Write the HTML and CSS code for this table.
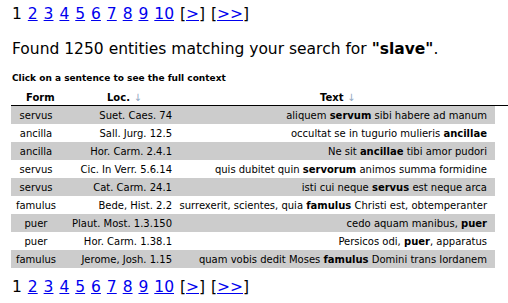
FILE: index.html
```html
<!DOCTYPE html>
<html>
<head>
<meta charset="utf-8">
<link rel="stylesheet" href="styles.css">
</head>
<body>
<div class="pager">1 <a href="#">2</a> <a href="#">3</a> <a href="#">4</a> <a href="#">5</a> <a href="#">6</a> <a href="#">7</a> <a href="#">8</a> <a href="#">9</a> <a href="#">10</a> [<a href="#">&gt;</a>] [<a href="#">&gt;&gt;</a>]</div>
<h1 class="found">Found 1250 entities matching your search for <b>"slave"</b>.</h1>
<p class="hint">Click on a sentence to see the full context</p>
<table class="results">
<colgroup><col class="w-form"><col class="w-loc"><col class="w-text"><col class="w-pad"></colgroup>
<thead>
<tr><th class="c-form"><span class="h-form">Form</span></th><th class="c-loc"><span class="h-loc">Loc. <span class="arr">&darr;</span></span></th><th class="c-text"><span class="h-text">Text <span class="arr">&darr;</span></span></th><th class="c-pad"></th></tr>
</thead>
<tbody>
<tr class="odd"><td class="c-form">servus</td><td class="c-loc">Suet. Caes. 74</td><td class="c-text">aliquem <b>servum</b> sibi habere ad manum</td><td class="c-pad"></td></tr>
<tr><td class="c-form">ancilla</td><td class="c-loc">Sall. Jurg. 12.5</td><td class="c-text">occultat se in tugurio mulieris <b>ancillae</b></td><td class="c-pad"></td></tr>
<tr class="odd"><td class="c-form">ancilla</td><td class="c-loc">Hor. Carm. 2.4.1</td><td class="c-text">Ne sit <b>ancillae</b> tibi amor pudori</td><td class="c-pad"></td></tr>
<tr><td class="c-form">servus</td><td class="c-loc">Cic. In Verr. 5.6.14</td><td class="c-text">quis dubitet quin <b>servorum</b> animos summa formidine</td><td class="c-pad"></td></tr>
<tr class="odd"><td class="c-form">servus</td><td class="c-loc">Cat. Carm. 24.1</td><td class="c-text">isti cui neque <b>servus</b> est neque arca</td><td class="c-pad"></td></tr>
<tr><td class="c-form">famulus</td><td class="c-loc">Bede, Hist. 2.2</td><td class="c-text">surrexerit, scientes, quia <b>famulus</b> Christi est, obtemperanter</td><td class="c-pad"></td></tr>
<tr class="odd"><td class="c-form">puer</td><td class="c-loc">Plaut. Most. 1.3.150</td><td class="c-text">cedo aquam manibus, <b>puer</b></td><td class="c-pad"></td></tr>
<tr><td class="c-form">puer</td><td class="c-loc">Hor. Carm. 1.38.1</td><td class="c-text">Persicos odi, <b>puer</b>, apparatus</td><td class="c-pad"></td></tr>
<tr class="odd"><td class="c-form">famulus</td><td class="c-loc">Jerome, Josh. 1.15</td><td class="c-text">quam vobis dedit Moses <b>famulus</b> Domini trans Iordanem</td><td class="c-pad"></td></tr>
</tbody>
</table>
<div class="pager pager-bottom">1 <a href="#">2</a> <a href="#">3</a> <a href="#">4</a> <a href="#">5</a> <a href="#">6</a> <a href="#">7</a> <a href="#">8</a> <a href="#">9</a> <a href="#">10</a> [<a href="#">&gt;</a>] [<a href="#">&gt;&gt;</a>]</div>
</body>
</html>
```
FILE: styles.css
```css
body {
  margin: 0;
  padding: 4px 0 0 12px;
  font-family: "DejaVu Sans", Verdana, sans-serif;
  color: #000;
  background: #fff;
}
.pager {
  font-size: 15.5px;
  line-height: 20px;
  word-spacing: 1px;
  white-space: nowrap;
}
.pager a { color: #0000ee; }
.pager-bottom { margin-top: 9px; }
.found {
  margin: 15px 0 0 0;
  font-size: 15.5px;
  font-weight: normal;
  line-height: 20px;
  white-space: nowrap;
}
.hint {
  margin: 13px 0 0 0;
  font-size: 9px;
  font-weight: bold;
  line-height: 12px;
}
.results {
  margin: 5px 0 0 -1px;
  border-collapse: collapse;
  table-layout: fixed;
  width: 497px;
  font-size: 10px;
}
.w-form { width: 50px; }
.w-loc { width: 111px; }
.w-text { width: 323px; }
.w-pad { width: 13px; }
.results th {
  font-weight: bold;
  font-size: 10px;
  height: 14px;
  padding: 0 0 2px 0;
  border-bottom: 1px solid #000;
  vertical-align: bottom;
  text-align: left;
  white-space: nowrap;
}
.results td {
  height: 18px;
  padding: 0;
  white-space: nowrap;
}
.results tr.odd td { background: #cccccc; }
.results td.c-pad { background: #fff; }
.results tr.odd td.c-pad { background: #fff; }
.c-form { text-align: center; }
.c-loc { text-align: right; }
.results td.c-text { text-align: right; padding-right: 8px; }
.h-form { margin-left: 15px; }
.h-loc { margin-left: 46px; }
.h-text { margin-left: 148px; }
.arr { color: #8fa6bf; font-weight: normal; }
```
